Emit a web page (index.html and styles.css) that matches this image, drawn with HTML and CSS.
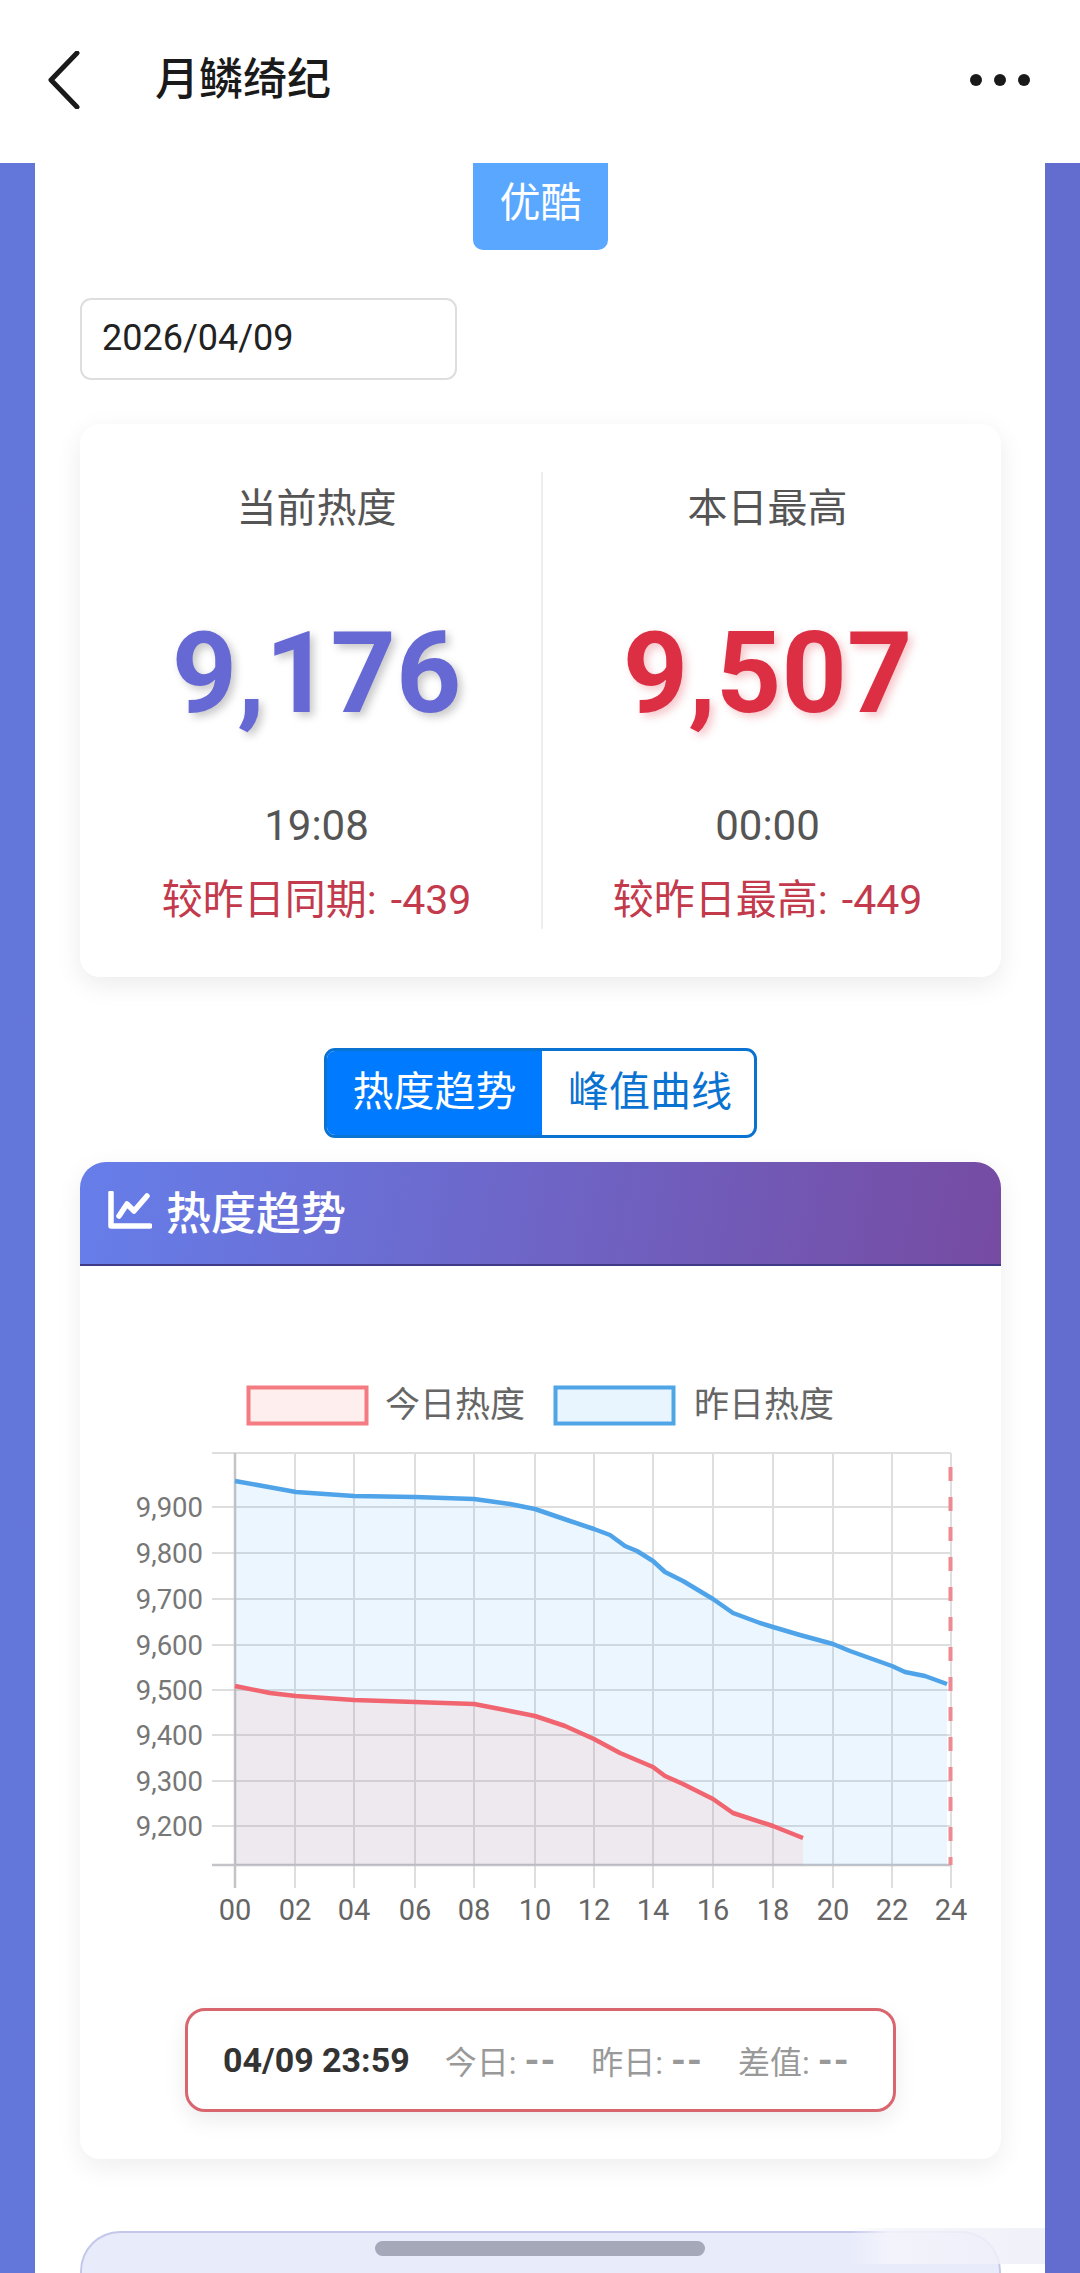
FILE: index.html
```html
<!DOCTYPE html>
<html lang="zh-CN">
<head>
<meta charset="UTF-8">
<meta name="viewport" content="width=device-width, initial-scale=1.0">
<title>月鳞绮纪</title>
<link rel="stylesheet" href="styles.css">
</head>
<body>
  <header class="topbar">
    <svg class="back-icon" viewBox="0 0 32 58"><path d="M29 2 L3 29 L29 56"/></svg>
    <div class="topbar-title">月鳞绮纪</div>
    <div class="more">
      <span class="dot"></span><span class="dot"></span><span class="dot"></span>
    </div>
  </header>

  <div class="page">
    <main class="panel">
      <div class="platform-row">
        <div class="platform-btn">优酷</div>
      </div>
      <div class="date-box">2026/04/09</div>

      <section class="stat-card">
        <div class="stat-col">
          <div class="stat-label">当前热度</div>
          <div class="stat-value value-blue">9,176</div>
          <div class="stat-time">19:08</div>
          <div class="stat-diff">较昨日同期: -439</div>
        </div>
        <div class="stat-col">
          <div class="stat-label">本日最高</div>
          <div class="stat-value value-red">9,507</div>
          <div class="stat-time">00:00</div>
          <div class="stat-diff">较昨日最高: -449</div>
        </div>
      </section>

      <div class="tabs">
        <div class="tab tab-active">热度趋势</div>
        <div class="tab">峰值曲线</div>
      </div>

      <section class="chart-card">
        <div class="chart-head">
          <svg class="chart-icon" viewBox="0 0 44 38"><path d="M3 2 V35 H42"/><path d="M11 25 L19 13 L26 20 L39 5"/></svg>
          <span>热度趋势</span>
        </div>

        <svg class="chart" viewBox="80 1340 921 620">
          <!-- legend -->
          <rect class="legend-red" x="248.500" y="1386.500" width="118" height="36"/>
          <text class="legend-text" x="385" y="1416">今日热度</text>
          <rect class="legend-blue" x="555.500" y="1386.500" width="118" height="36"/>
          <text class="legend-text" x="694" y="1416">昨日热度</text>

          <!-- grid -->
          <g class="grid">
            <path d="M212 1452H951M212 1506H951M212 1552H951M212 1598H951M212 1644H951M212 1689H951M212 1734H951M212 1780H951M212 1825H951"/>
            <path d="M295 1452V1887M354 1452V1887M415 1452V1887M474 1452V1887M535 1452V1887M594 1452V1887M653 1452V1887M713 1452V1887M773 1452V1887M833 1452V1887M892 1452V1887M951 1452V1887"/>
          </g>
          <path class="axis" d="M235 1452V1887M212 1864H951"/>

          <!-- fills -->
          <polygon class="fill-blue" points="235,1480 263,1485 296,1491 354,1495 415,1496 474,1498 510,1503 535,1508 570,1520 594,1528 610,1534 625,1545 637,1550 653,1560 665,1571 683,1580 713,1598 733,1612 760,1622 773,1626 800,1634 833,1643 850,1650 892,1665 905,1671 925,1675 947,1683 947,1864 235,1864"/>
          <polygon class="fill-red" points="235,1685 270,1692 296,1695 354,1699 415,1701 474,1703 500,1708 520,1712 535,1715 565,1725 594,1738 620,1752 653,1766 665,1775 683,1783 713,1798 733,1812 773,1825 803,1837 803,1864 235,1864"/>

          <!-- lines -->
          <polyline class="line-blue" points="235,1480 263,1485 296,1491 354,1495 415,1496 474,1498 510,1503 535,1508 570,1520 594,1528 610,1534 625,1545 637,1550 653,1560 665,1571 683,1580 713,1598 733,1612 760,1622 773,1626 800,1634 833,1643 850,1650 892,1665 905,1671 925,1675 947,1683"/>
          <polyline class="line-red" points="235,1685 270,1692 296,1695 354,1699 415,1701 474,1703 500,1708 520,1712 535,1715 565,1725 594,1738 620,1752 653,1766 665,1775 683,1783 713,1798 733,1812 773,1825 803,1837"/>
          <path class="marker" d="M950.500 1466V1864"/>

          <!-- y labels -->
          <g class="tick tick-y">
            <text x="203" y="1516">9,900</text>
            <text x="203" y="1562">9,800</text>
            <text x="203" y="1608">9,700</text>
            <text x="203" y="1654">9,600</text>
            <text x="203" y="1699">9,500</text>
            <text x="203" y="1744">9,400</text>
            <text x="203" y="1790">9,300</text>
            <text x="203" y="1835">9,200</text>
          </g>
          <!-- x labels -->
          <g class="tick tick-x">
            <text x="235" y="1919">00</text>
            <text x="295" y="1919">02</text>
            <text x="354" y="1919">04</text>
            <text x="415" y="1919">06</text>
            <text x="474" y="1919">08</text>
            <text x="535" y="1919">10</text>
            <text x="594" y="1919">12</text>
            <text x="653" y="1919">14</text>
            <text x="713" y="1919">16</text>
            <text x="773" y="1919">18</text>
            <text x="833" y="1919">20</text>
            <text x="892" y="1919">22</text>
            <text x="951" y="1919">24</text>
          </g>
        </svg>

        <div class="readout">
          <span class="readout-time">04/09 23:59</span>
          <span class="readout-item">今日: <b class="dash">--</b></span>
          <span class="readout-item">昨日: <b class="dash">--</b></span>
          <span class="readout-item">差值: <b class="dash">--</b></span>
        </div>
      </section>

      <section class="next-card"></section>
    </main>
  </div>

  <div class="home-bar"></div>
  <div class="smear"></div>
</body>
</html>
```

FILE: styles.css
```css
html, body {
  height: 100%;
}

body {
  display: flex;
  flex-direction: column;
  margin: 0;
  overflow: hidden;
  background: #fff;
  font-family: Roboto, "Noto Sans CJK SC", sans-serif;
}

/* top bar */
.topbar {
  display: flex;
  align-items: center;
  flex: 0 0 163px;
  box-sizing: border-box;
  padding: 0 48px 3px 48px;
  background: #fff;
  color: #1a1a1a;
}

.back-icon {
  width: 32px;
  height: 58px;
  fill: none;
  stroke: #1a1a1a;
  stroke-width: 5;
  stroke-linecap: round;
  stroke-linejoin: round;
}

.topbar-title {
  margin-left: 75px;
  font-size: 44px;
  font-weight: 500;
  line-height: 60px;
}

.more {
  display: flex;
  gap: 12px;
  margin-left: auto;
  margin-right: 2px;
}

.dot {
  width: 12px;
  height: 12px;
  border-radius: 50%;
  background: #1a1a1a;
}

/* page */
.page {
  flex: 1;
  min-height: 0;
  padding: 0 35px;
  background: linear-gradient(90deg, #6376da, #636ccf);
}

.panel {
  box-sizing: border-box;
  height: 100%;
  padding: 0 44px 0 45px;
  overflow: hidden;
  background: #fff;
}

.platform-row {
  display: flex;
  justify-content: center;
}

.platform-btn {
  width: 135px;
  height: 87px;
  border-radius: 0 0 10px 10px;
  background: #5aa7ff;
  color: #fff;
  font-size: 41px;
  line-height: 80px;
  text-align: center;
}

.date-box {
  box-sizing: border-box;
  width: 377px;
  height: 82px;
  margin-top: 48px;
  padding-left: 20px;
  border: 2px solid #dedede;
  border-radius: 11px;
  color: #222;
  font-size: 36px;
  line-height: 77px;
}

/* stat card */
.stat-card {
  display: flex;
  box-sizing: border-box;
  height: 553px;
  margin-top: 44px;
  padding: 48px 9px 48px 12px;
  border-radius: 20px;
  background: #fff;
  box-shadow: 0 8px 26px rgba(0, 0, 0, 0.08);
}

.stat-col {
  display: flex;
  flex: 1;
  flex-direction: column;
  align-items: center;
}

.stat-col + .stat-col {
  border-left: 2px solid #eee;
}

.stat-label {
  margin-top: 10px;
  color: #555;
  font-size: 40px;
  line-height: 54px;
}

.stat-value {
  margin-top: 67px;
  font-size: 114px;
  font-weight: 700;
  line-height: 140px;
  text-shadow: 4px 4px 8px rgba(0, 0, 0, 0.22);
}

.value-blue {
  color: #6668d3;
}

.value-red {
  color: #dc2f44;
  text-shadow: 4px 4px 8px rgba(220, 53, 69, 0.28);
}

.stat-time {
  margin-top: 55px;
  color: #555;
  font-size: 42px;
  line-height: 56px;
}

.stat-diff {
  margin-top: 19px;
  color: #c23a4c;
  font-size: 41px;
  line-height: 54px;
  word-spacing: 4px;
}

/* tabs */
.tabs {
  display: flex;
  box-sizing: border-box;
  width: 433px;
  height: 90px;
  margin: 71px auto 0;
  border: 3px solid #0a72d0;
  border-radius: 11px;
  overflow: hidden;
}

.tab {
  flex: 0 0 216px;
  color: #0a72d0;
  font-size: 41px;
  line-height: 82px;
  text-align: center;
}

.tab-active {
  flex-basis: 215px;
  background: #007bff;
  color: #fff;
}

/* chart card */
.chart-card {
  height: 997px;
  margin-top: 24px;
  border-radius: 26px 26px 20px 20px;
  background: #fff;
  box-shadow: 0 8px 26px rgba(0, 0, 0, 0.07);
}

.chart-head {
  display: flex;
  align-items: center;
  gap: 14px;
  box-sizing: border-box;
  height: 104px;
  padding: 0 0 6px 28px;
  border-bottom: 2px solid #413a86;
  border-radius: 26px 26px 0 0;
  background: linear-gradient(100deg, #667eea, #764ba2);
  color: #fff;
  font-size: 45px;
  font-weight: 500;
}

.chart-icon {
  width: 44px;
  height: 38px;
  fill: none;
  stroke: #fff;
  stroke-width: 5.500;
  stroke-linecap: round;
  stroke-linejoin: round;
}

.chart {
  display: block;
  width: 921px;
  height: 620px;
  margin-top: 75px;
}

.legend-red {
  fill: #ffeeee;
  stroke: #f47b82;
  stroke-width: 4;
}

.legend-blue {
  fill: #e9f5fe;
  stroke: #4fa5e6;
  stroke-width: 4;
}

.legend-text {
  fill: #666;
  font-size: 35px;
}

.grid {
  fill: none;
  stroke: #dedede;
  stroke-width: 2;
}

.axis {
  fill: none;
  stroke: #c4c4c8;
  stroke-width: 2.500;
}

.fill-blue {
  fill: rgba(60, 170, 255, 0.1);
}

.fill-red {
  fill: rgba(255, 120, 100, 0.1);
}

.line-blue,
.line-red {
  fill: none;
  stroke-width: 4.500;
  stroke-linejoin: round;
}

.line-blue {
  stroke: #4fa3e8;
}

.line-red {
  stroke: #f0656f;
}

.marker {
  fill: none;
  stroke: #ee8a92;
  stroke-width: 4;
  stroke-dasharray: 14 16;
}

.tick-y {
  fill: #777;
  font-size: 27.500px;
  text-anchor: end;
}

.tick-x {
  fill: #666;
  font-size: 29px;
  text-anchor: middle;
}

/* value readout under the chart */
.readout {
  display: flex;
  align-items: center;
  gap: 35px;
  box-sizing: border-box;
  width: 711px;
  height: 104px;
  margin: 47px auto 0;
  padding-left: 35px;
  border: 3px solid #d9656e;
  border-radius: 20px;
  background: #fff;
  box-shadow: 0 8px 22px rgba(0, 0, 0, 0.08);
}

.readout-time {
  color: #333;
  font-size: 34px;
  font-weight: 700;
}

.readout-item {
  color: #999;
  font-size: 32px;
}

.dash {
  font-size: 38px;
  line-height: 1;
  letter-spacing: 1px;
}

.next-card {
  height: 120px;
  margin-top: 72px;
  border: 2px solid #c4c7ea;
  border-bottom: 0;
  border-radius: 40px 40px 0 0;
  background: #e8ebfa;
}

/* overlays */
.home-bar {
  position: absolute;
  left: 375px;
  top: 2241px;
  width: 330px;
  height: 15px;
  border-radius: 8px;
  background: #a5a8b8;
}

.smear {
  position: absolute;
  left: 850px;
  top: 2228px;
  width: 195px;
  height: 36px;
  background: linear-gradient(90deg, rgba(240, 240, 250, 0), rgba(244, 244, 252, 0.9) 20%, rgba(238, 238, 248, 0.85));
}
```
